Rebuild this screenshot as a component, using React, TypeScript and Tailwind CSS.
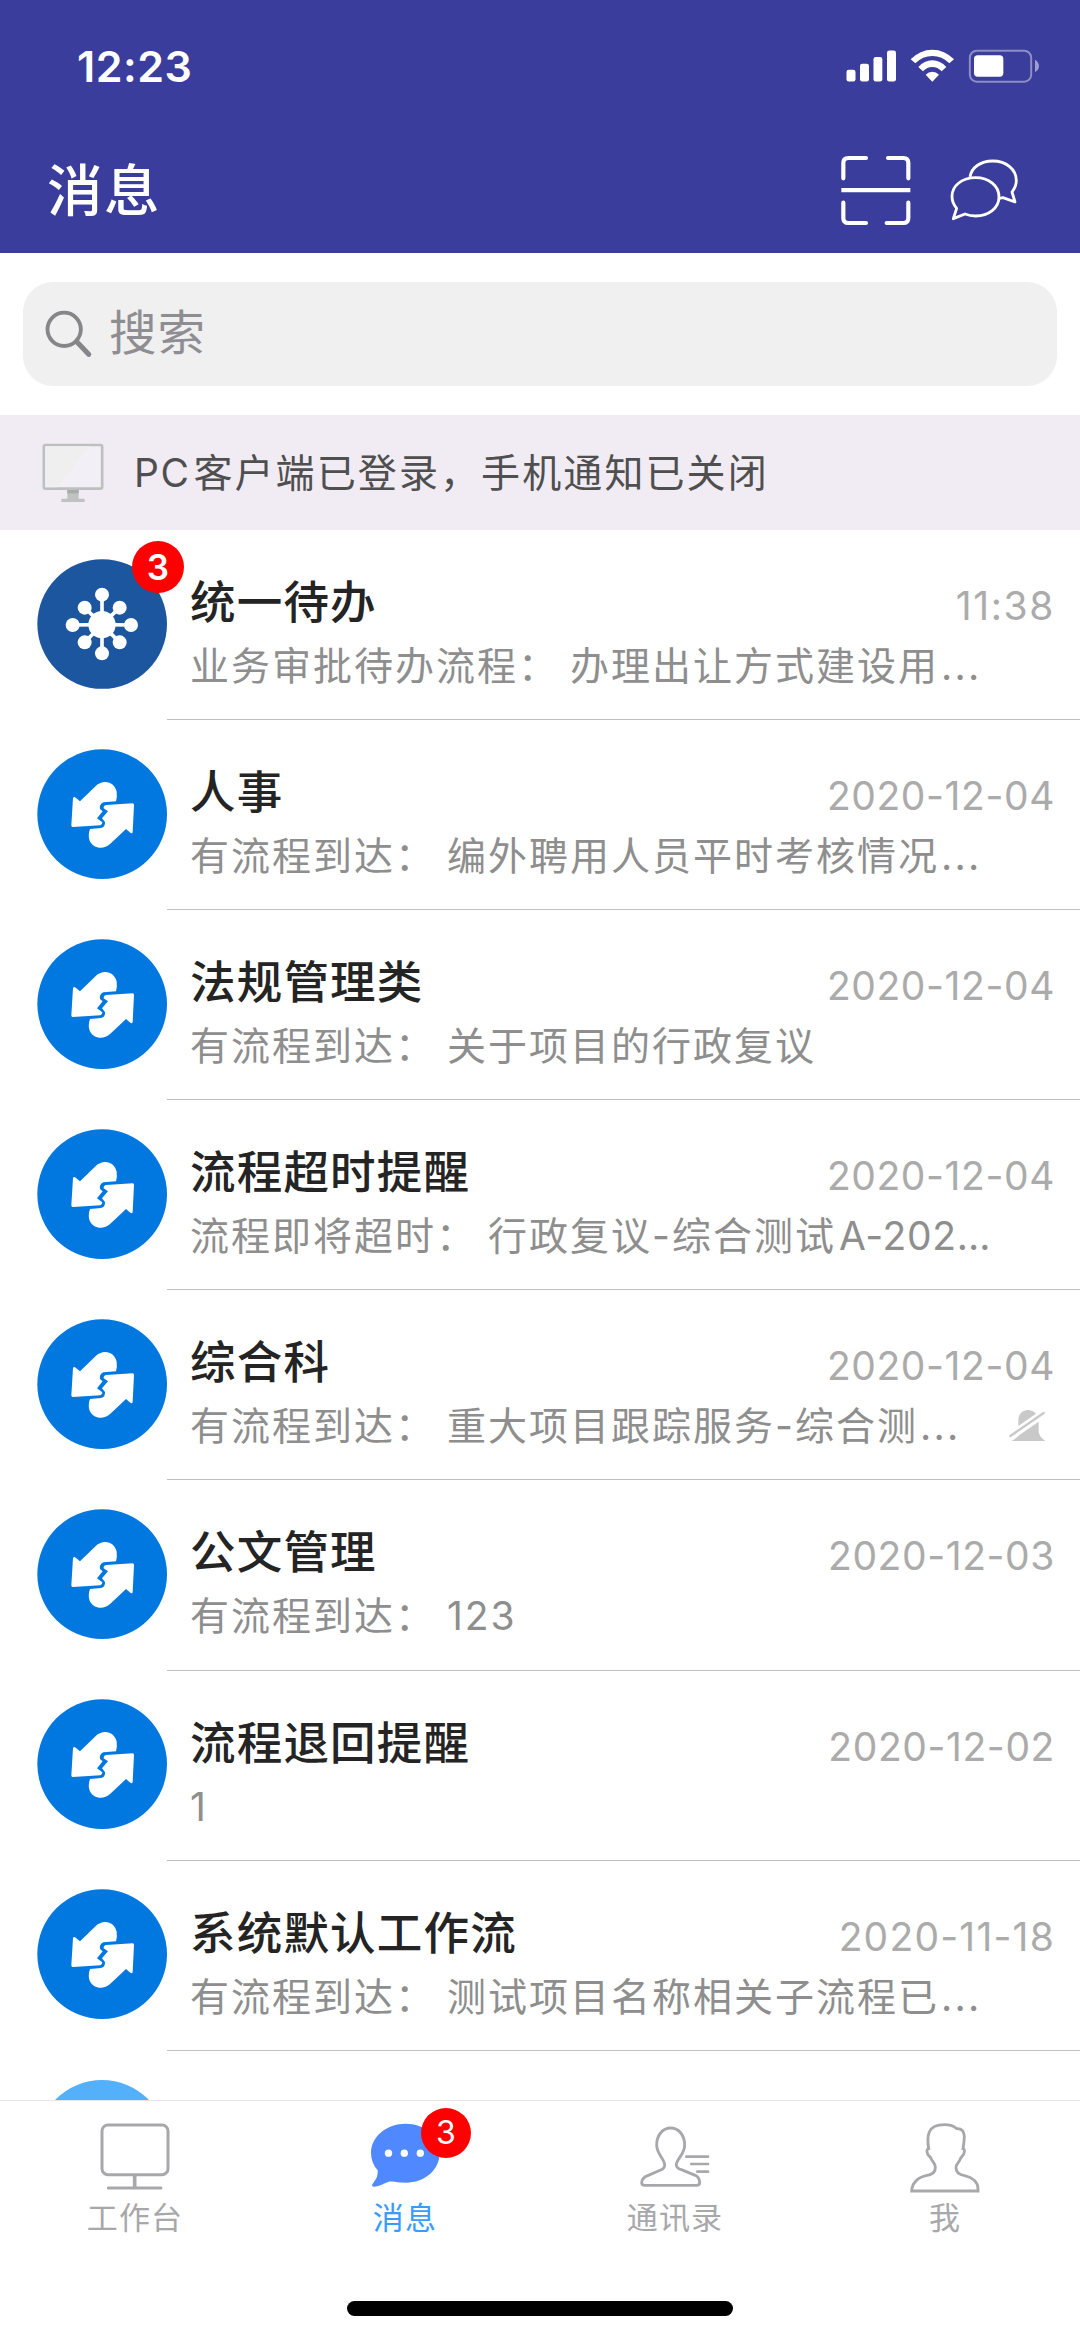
import React from "react";

type Message = {
  title: string;
  time: string;
  timeTracking?: string;
  preview: string;
  latin?: string;
  truncated?: boolean;
  kind?: "todo";
  badge?: number;
  muted?: boolean;
};

const messages: Message[] = [
  { title: "统一待办", time: "11:38", timeTracking: "tracking-[1.600px]", preview: "业务审批待办流程： 办理出让方式建设用", truncated: true, kind: "todo", badge: 3 },
  { title: "人事", time: "2020-12-04", preview: "有流程到达： 编外聘用人员平时考核情况", truncated: true },
  { title: "法规管理类", time: "2020-12-04", preview: "有流程到达： 关于项目的行政复议" },
  { title: "流程超时提醒", time: "2020-12-04", preview: "流程即将超时： 行政复议-综合测试", latin: "A-202…" },
  { title: "综合科", time: "2020-12-04", preview: "有流程到达： 重大项目跟踪服务-综合测", truncated: true, muted: true },
  { title: "公文管理", time: "2020-12-03", preview: "有流程到达： 123" },
  { title: "流程退回提醒", time: "2020-12-02", preview: "1" },
  { title: "系统默认工作流", time: "2020-11-18", timeTracking: "tracking-[1.200px]", preview: "有流程到达： 测试项目名称相关子流程已", truncated: true },
];

function StatusIcons() {
  return (
    <svg className="h-[34px] w-[194px]" viewBox="138 88 582 102" fill="none">
      <g fill="#fff">
        <rect x="139.500" y="150" width="27" height="35.500" rx="7" />
        <rect x="180" y="132" width="27" height="53.500" rx="7" />
        <rect x="220.500" y="112" width="26.500" height="73.500" rx="7" />
        <rect x="261" y="92.500" width="27" height="93" rx="7" />
        <path d="M332 119Q360 90 397 90Q434 90 462 119L448 131Q426 109 397 109Q368 109 346 131Z" />
        <path d="M355 142Q373 122 397 122Q421 122 439 142L425 155Q413 142 397 142Q381 142 369 155Z" />
        <path d="M377 165Q386 156 397 156Q408 156 417 165L397 186Z" />
        <rect x="522" y="107" width="88" height="64" rx="11" />
      </g>
      <rect x="509.500" y="93" width="184" height="93" rx="21" stroke="#fff" strokeOpacity="0.42" strokeWidth="6" />
      <path d="M705 120Q717 127 717 139Q717 151 705 157Z" fill="#fff" fillOpacity="0.5" />
    </svg>
  );
}

function ScanIcon() {
  return (
    <svg className="h-[71px] w-[70px]" viewBox="122 403 210 213" fill="none" stroke="#fff" strokeWidth="12.500" strokeLinecap="round">
      <path d="M129 473V427Q129 412 144 412H197M263 412H309Q324 412 324 427V473M129 546V592Q129 607 144 607H197M259 607H309Q324 607 324 592V546" />
      <path d="M123 508.500H330" strokeLinecap="butt" />
    </svg>
  );
}

function ChatsIcon() {
  return (
    <svg className="h-[64px] w-[70px]" viewBox="446 418 210 192" fill="none" stroke="#fff" strokeWidth="8.500" strokeLinejoin="round">
      <path d="M459 600L469 569C459 558 455 547 455 533C455 501 485 477 526 477C566 477 596 502 596 535C596 568 565 592 526 592C514 592 504 590 494 586Z" />
      <path d="M509 475C513 447 540 427 577 427C618 427 648 452 648 486C648 498 643 509 635 520L644 550L608 537L597 539" />
    </svg>
  );
}

function SearchIcon() {
  return (
    <svg className="h-[48px] w-[47px]" viewBox="76 118 141 144" fill="none" stroke="#85858a">
      <circle cx="133.500" cy="176" r="50" strokeWidth="11.500" />
      <path d="M172 214L207 251" strokeWidth="15" strokeLinecap="round" />
    </svg>
  );
}

function DesktopIcon() {
  return (
    <svg className="h-[60px] w-[62px]" viewBox="67 519 186 180">
      <rect x="72.500" y="525" width="175" height="131" rx="5" fill="#f2eff7" stroke="#bebfbf" strokeWidth="8" />
      <path d="M77 529H211L112 652H77Z" fill="#efeff0" />
      <path d="M143 660H177V686H195V696H125V686H143Z" fill="#c0c1c1" />
      <path d="M143 660H177V670H143Z" fill="#a9aaaa" />
    </svg>
  );
}

const spokes = [
  [246, 193],
  [299, 232],
  [333, 284],
  [299, 336],
  [246, 369],
  [194, 336],
  [158, 284],
  [194, 232],
];

function TodoAvatar() {
  return (
    <svg className="size-[130px]" viewBox="51 86 390 390">
      <circle cx="246.500" cy="281" r="194.500" fill="#1b569f" />
      <g fill="#fff" stroke="#fff" strokeWidth="11">
        {spokes.map(([x, y]) => (
          <g key={`${x}-${y}`}>
            <path d={`M246 283L${x} ${y}`} />
            <circle cx={x} cy={y} r="21" stroke="none" />
          </g>
        ))}
        <circle cx="246" cy="283" r="41" stroke="none" />
      </g>
    </svg>
  );
}

function FlowAvatar() {
  return (
    <svg className="size-[130px]" viewBox="51 56 390 390">
      <circle cx="246.500" cy="251.500" r="194.500" fill="#0078e0" />
      <g fill="#fff">
        <path d="M159 203Q162 198 167 202L180 213L225 169C249 144 284 154 290 184Q292 198 288 213L250 216Q237 222 240 236L248 243L231 264L247 276Q247 284 241 285L158 290Q154 290 154 285Z" />
        <path d="M258 224L338 219Q342 219 342 224L338 305Q337 311 331 307L318 296L271 340C251 359 220 355 209 331Q203 315 210 296L243 293Q256 291 255 275L246 264L264 243L251 234Q250 226 258 224Z" />
      </g>
    </svg>
  );
}

function MutedBell() {
  return (
    <svg className="h-[34px] w-[38px]" viewBox="926 336 114 102" fill="#c9c9c9">
      <path d="M954 387V369C954 340 988 329 1007 350Z" />
      <path d="M934 432C944 426 951 420 958 413L1015 374V406Q1017 419 1035 432Z" />
      <path d="M930 417L1030 348" stroke="#c9c9c9" strokeWidth="7" strokeLinecap="round" />
    </svg>
  );
}

function WorkbenchIcon() {
  return (
    <svg className="h-[70px] w-[70px]" viewBox="31 67 210 210" fill="none" stroke="#a8a8ab" strokeWidth="9">
      <rect x="37" y="73" width="198" height="149" rx="18" />
      <path d="M135 222V260" strokeWidth="11" />
      <path d="M56 262H214" strokeLinecap="round" />
    </svg>
  );
}

function BubbleIcon() {
  return (
    <svg className="h-[70px] w-[70px]" viewBox="839 67 210 210">
      <path d="M842 157C842 107 889 69 946 69C1003 69 1048 107 1048 157C1048 208 1003 246 946 246C925 246 907 240 895 243C880 248 866 258 850 258Q842 256 847 249C859 236 863 224 862 209C849 194 842 177 842 157Z" fill="#5089ff" />
      <g fill="#fff">
        <circle cx="894.500" cy="157.500" r="11" />
        <circle cx="942" cy="157.500" r="11" />
        <circle cx="990" cy="157.500" r="11" />
      </g>
    </svg>
  );
}

function ContactsIcon() {
  return (
    <svg className="h-[70px] w-[70px]" viewBox="60 67 210 210" fill="none" stroke="#a8a8ab" strokeWidth="8.500" strokeLinejoin="round" strokeLinecap="round">
      <path d="M152 82C127 82 110 105 110 133C110 161 134 175 134 193C134 201 130 205 122 208L83 225C70 230 65 237 65 247Q66 254 74 254H230Q238 254 239 247C239 237 236 229 226 224L184 207C174 204 169 200 169 192C170 174 194 162 194 133C194 105 177 82 152 82Z" />
      <path d="M199 168H264M214 190H264M232 213H264" strokeWidth="8" />
    </svg>
  );
}

function MeIcon() {
  return (
    <svg className="h-[70px] w-[70px]" viewBox="869 67 210 210" fill="none" stroke="#a8a8ab" strokeWidth="8.500" strokeLinejoin="miter">
      <path d="M874 271C874 249 892 230 917 225C935 222 946 213 945 199C944 187 936 183 933 175C931 168 925 167 922 160C919 152 918 146 925 144C922 126 921 108 927 94C934 78 951 72 972 72C988 72 1001 76 1009 84C1024 83 1031 93 1032 107C1032 121 1030 132 1028 144C1035 146 1032 154 1030 160C1027 168 1021 169 1019 177C1016 186 1007 189 1007 201C1007 214 1017 222 1033 225C1056 230 1073 244 1073 265V271Z" />
    </svg>
  );
}

const tabs = [
  { label: "工作台", icon: <WorkbenchIcon /> },
  { label: "消息", icon: <BubbleIcon />, active: true, badge: 3 },
  { label: "通讯录", icon: <ContactsIcon /> },
  { label: "我", icon: <MeIcon /> },
];

function MessageRow({ message }: { message: Message }) {
  return (
    <li className="flex h-[190.100px] shrink-0 pl-[37px]">
      <div className="relative mt-[28.500px] size-[130px] shrink-0">
        {message.kind === "todo" ? <TodoAvatar /> : <FlowAvatar />}
        {message.badge && (
          <span className="absolute -top-[17.500px] left-[95px] flex size-[52px] items-center justify-center rounded-full bg-[#ff0000] pt-px text-[35px] font-semibold text-white">
            {message.badge}
          </span>
        )}
      </div>
      <div className="min-w-0 flex-1 border-b border-[#c0c0c4] pt-[45px] pr-[25px] pl-[23px]">
        <div className="flex justify-between">
          <h2 className="text-[45.500px] leading-[56px] font-medium tracking-[1.200px] text-[#242424]">{message.title}</h2>
          <time className={`pt-[3px] text-[39px] leading-[56px] text-[#ababab] ${message.timeTracking ?? "tracking-[0.600px]"}`}>
            {message.time}
          </time>
        </div>
        <div className="mt-[7px] flex items-center justify-between">
          <p className="text-[39px] leading-[50px] tracking-[2px] whitespace-nowrap text-[#8e8e8e] [word-spacing:-2px]">
            {message.preview}
            {message.latin && <span className="ml-[3px] tracking-[0.700px]">{message.latin}</span>}
            {message.truncated && <span className="ml-[2px] tracking-[2.300px]">...</span>}
          </p>
          {message.muted && (
            <span className="mr-[8px]">
              <MutedBell />
            </span>
          )}
        </div>
      </div>
    </li>
  );
}

export default function App() {
  return (
    <div className="flex h-[2339px] w-[1080px] flex-col overflow-hidden bg-white font-['Inter','Noto_Sans_CJK_SC',sans-serif]">
      <header className="h-[253px] shrink-0 bg-[#3a3d9b] text-white">
        <div className="flex h-[132px] items-center justify-between pr-[40px] pl-[77px]">
          <span className="text-[43px] leading-[50px] font-semibold tracking-[0.500px]">12:23</span>
          <StatusIcons />
        </div>
        <div className="flex h-[116px] items-center pr-[61px] pl-[47px]">
          <h1 className="flex-1 pt-[2px] text-[55.500px] leading-[64px] font-medium tracking-[1.500px]">消息</h1>
          <ScanIcon />
          <span className="ml-[38px]">
            <ChatsIcon />
          </span>
        </div>
      </header>

      <div className="h-[162px] shrink-0 px-[23px] pt-[29px]">
        <div className="flex h-[104px] items-center gap-[17px] rounded-[30px] bg-[#f0f0f0] pl-[22px]">
          <SearchIcon />
          <span className="pb-[2px] text-[47.500px] leading-[60px] tracking-[1px] text-[#8e8e92]">搜索</span>
        </div>
      </div>

      <div className="flex h-[115px] shrink-0 items-center bg-[#f1ecf4] pl-[42px]">
        <DesktopIcon />
        <p className="ml-[30px] text-[39px] leading-[50px] tracking-[2.100px] text-[#4f4f4f]">
          <span className="mr-[3px] tracking-[1.500px]">PC</span>客户端已登录，手机通知已关闭
        </p>
      </div>

      <ul className="flex h-[1570px] shrink-0 flex-col overflow-hidden">
        {messages.map((message) => (
          <MessageRow key={message.title} message={message} />
        ))}
        <li className="shrink-0 pt-[29px] pl-[37px]">
          <div className="size-[130px] rounded-full bg-[#54b0fb]" />
        </li>
      </ul>

      <nav className="grid h-[140px] shrink-0 grid-cols-4 border-t border-[#e6e6e6]">
        {tabs.map((tab) => (
          <div key={tab.label} className="flex flex-col items-center pt-[21.500px]">
            <div className="relative">
              {tab.icon}
              {tab.badge && (
                <span className="absolute -top-[15px] left-[51px] flex size-[50px] items-center justify-center rounded-full bg-[#ff0000] pt-px text-[32px] text-white">
                  {tab.badge}
                </span>
              )}
            </div>
            <span className={tab.active ? "mt-[5px] text-[31px] leading-[40px] tracking-[1.200px] text-[#3a9bff]" : "mt-[5px] text-[31px] leading-[40px] tracking-[1.200px] text-[#a8a8ab]"}>
              {tab.label}
            </span>
          </div>
        ))}
      </nav>
      <div className="flex justify-center pt-[61px]">
        <div className="h-[15px] w-[386px] rounded-full bg-black" />
      </div>
    </div>
  );
}
